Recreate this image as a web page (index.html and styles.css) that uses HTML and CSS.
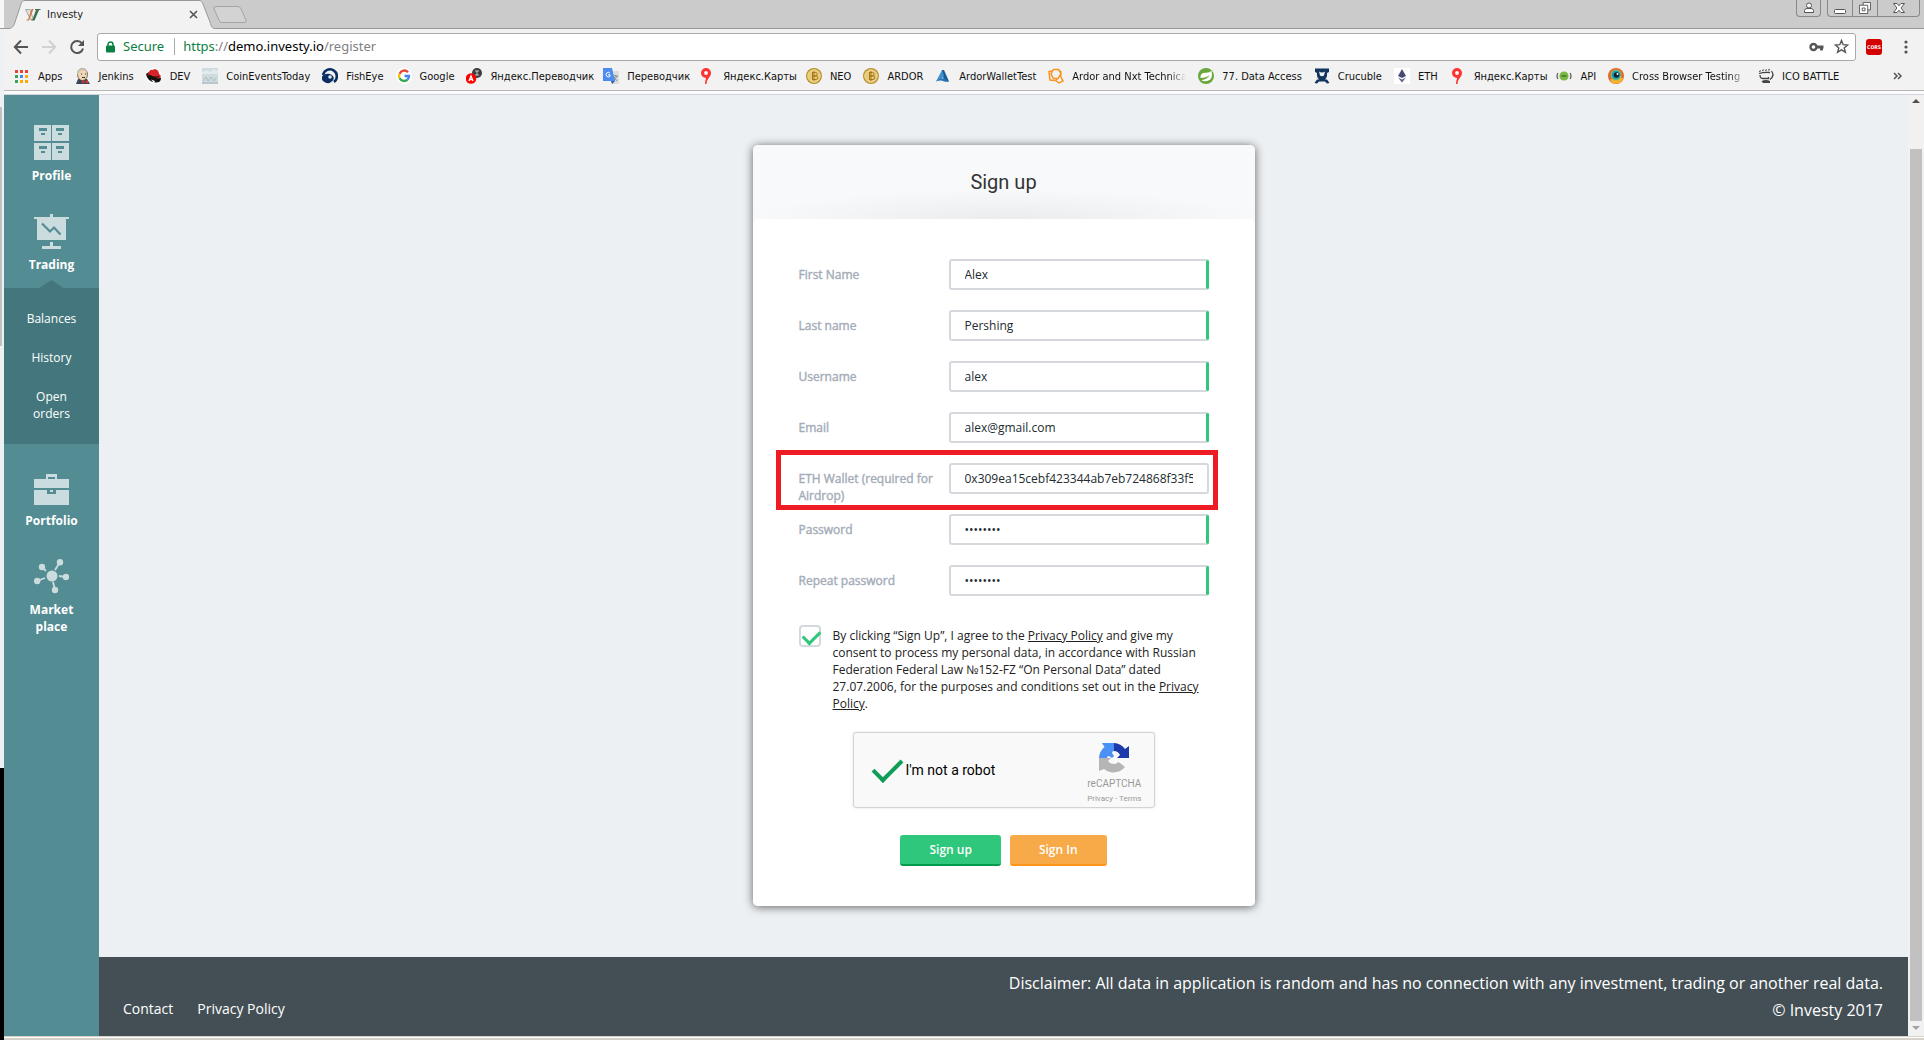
FILE: index.html
```html
<!DOCTYPE html>
<html lang="en">
<head>
    <meta charset="UTF-8">
    <meta name="viewport" content="width=device-width, initial-scale=1.0">
    <title>Investy</title>
    <link rel="stylesheet" href="styles.css">
</head>
<body>
    <div class="desktop-edge">
        <div class="edge-top"></div>
        <div class="edge-page"><div class="edge-thumb"></div></div>
        <div class="edge-black"></div>
    </div>
    <div class="browser">
        <!-- Tabs -->
        <div class="tab-strip">
            <div class="tab">
                <svg class="tab-shape" viewBox="0 0 206 29"><path d="M0 28.500C4 28 5 25 6 22L12 4C13 1 14 .5 16 .5H189C192 .5 193 1 194 4L201 22C202 26 203 28.500 206 28.500V29H0Z" fill="#f2f2f2"/><path d="M0 28.500C4 28 5 25 6 22L12 4C13 1 14 .5 16 .5H189C192 .5 193 1 194 4L201 22C202 26 203 28.500 206 28.500" fill="none" stroke="#999"/></svg>
                <svg class="tab-logo" viewBox="0 0 16 16"><path d="M.5 2.500H5L8.500 12.500H5.500Z" fill="#dfe3e0" stroke="#8a8f8b" stroke-width=".7"/><path d="M6.500 2H8.500L4 13.500H1.500V12.500H3Z" fill="#d9773f"/><path d="M10 2h5.500v1H14l-4.500 10.500H6.500V12.500H7.500L11 3H10z" fill="#3f6f50"/></svg>
                <span class="tab-title">Investy</span>
                <button class="tab-close" aria-label="Close tab"><svg viewBox="0 0 9 9"><path d="M1 1l7 7M8 1l-7 7" stroke="#555" stroke-width="1.600"/></svg></button>
            </div>
            <button class="new-tab" aria-label="New tab"><svg viewBox="0 0 34 17"><path d="M3 .5H25Q27 .5 28 3L33 14Q34 16.500 31 16.500H9Q7 16.500 6 14L1 3Q0 .5 3 .5Z" fill="#d3d3d3" stroke="#a3a3a3"/></svg></button>
            <div class="window-buttons">
                <button class="win-user" aria-label="User"><svg viewBox="0 0 12 12"><circle cx="6" cy="3.500" r="2.500" fill="#fff" stroke="#555"/><path d="M1.500 10.500V8.500Q2 6.500 4 6.500H8Q10 6.500 10.500 8.500V10.500Z" fill="#fff" stroke="#555"/></svg></button>
                <div class="win-group">
                    <button aria-label="Minimize"><svg viewBox="0 0 12 12"><rect x=".5" y="7.500" width="11" height="4" rx="1" fill="#fff" stroke="#555"/></svg></button>
                    <button aria-label="Restore"><svg viewBox="0 0 13 13"><path d="M4.500 .5H12.500V8.500H4.500Z" fill="#fff" stroke="#555"/><path d="M.5 3.500H9.500V12.500H.5Z" fill="#fff" stroke="#555"/><path d="M3.500 6.500H6.500V9.500H3.500Z" fill="none" stroke="#555"/></svg></button>
                    <button class="win-close" aria-label="Close"><svg viewBox="0 0 12 12"><path d="M.5 1.500H4L6 3.800 8 1.500H11.500L8 6 11.500 10.500H8L6 8.200 4 10.500H.5L4 6Z" fill="#fff" stroke="#555"/></svg></button>
                </div>
            </div>
        </div>

        <!-- Address bar -->
        <div class="toolbar">
            <button class="tool" aria-label="Back"><svg viewBox="0 0 16 16"><path d="M15 8H2M8 1.500L1.800 8L8 14.500" fill="none" stroke="#555" stroke-width="2"/></svg></button>
            <button class="tool" aria-label="Forward"><svg viewBox="0 0 16 16"><path d="M1 8H14M8 1.500L14.200 8L8 14.500" fill="none" stroke="#d2d2d2" stroke-width="2"/></svg></button>
            <button class="tool" aria-label="Reload"><svg viewBox="0 0 16 16"><path d="M13 4.500A6 6 0 1 0 14 9.500" fill="none" stroke="#555" stroke-width="2"/><path d="M15 1V7H9Z" fill="#555"/></svg></button>
            <div class="address">
                <svg class="lock" viewBox="0 0 9 12"><path d="M2 5V3.500a2.500 2.500 0 0 1 5 0V5" fill="none" stroke="#0b8043" stroke-width="1.500"/><rect y="4.500" width="9" height="7" rx="1" fill="#0b8043"/></svg>
                <span class="secure">Secure</span>
                <div class="url" role="textbox" aria-label="Address"><span class="scheme">https</span>://<span class="host">demo.investy.io</span>/register</div>
                <button class="key" aria-label="Passwords"><svg viewBox="0 0 15 10"><circle cx="4.500" cy="5" r="3" fill="none" stroke="#555" stroke-width="2.400"/><path d="M7 5H14.500M12.500 5V8.500" stroke="#555" stroke-width="2.800" fill="none"/></svg></button>
                <button class="star" aria-label="Bookmark"><svg viewBox="0 0 15 15"><path d="M7.500 1.500L9.200 5.700L13.700 6L10.200 8.900L11.400 13.300L7.500 10.800L3.600 13.300L4.800 8.900L1.300 6L5.800 5.700Z" fill="none" stroke="#555" stroke-width="1.400"/></svg></button>
            </div>
            <button class="cors">CORS</button>
            <button class="dots" aria-label="Menu"><svg viewBox="0 0 4 14"><circle cx="2" cy="2" r="1.600" fill="#555"/><circle cx="2" cy="7" r="1.600" fill="#555"/><circle cx="2" cy="12" r="1.600" fill="#555"/></svg></button>
        </div>

        <!-- Bookmarks -->
        <nav class="bookmarks">
            <a href="#"><svg viewBox="0 0 16 16"><path d="M1 2h3v3H1zM6 2h3v3H6zM11 2h3v3h-3z" fill="#ea4335"/><path d="M1 7h3v3H1z" fill="#34a853"/><path d="M6 7h3v3H6z" fill="#4285f4"/><path d="M11 7h3v3h-3zM6 12h3v3H6zM11 12h3v3h-3z" fill="#fbaa05"/><path d="M1 12h3v3H1z" fill="#34a853"/></svg><span>Apps</span></a>
            <a href="#"><svg viewBox="0 0 16 16"><path d="M1 16l2-5h9l3 5z" fill="#3b4553"/><ellipse cx="7.500" cy="6.500" rx="5" ry="6" fill="#f0d6b7" stroke="#5b4a3b" stroke-width=".8"/><path d="M2 7Q1 1 7 0Q12 0 12 4Q8 1 5 3Q4 5 2 7Z" fill="#c9c0af"/><path d="M6 6h1M10 6h1M7 9.500h3" stroke="#333"/><path d="M7 12l3 1.500 3-1.500v3.500l-3-1.500-3 1.500z" fill="#d33833"/></svg><span>Jenkins</span></a>
            <a href="#"><svg viewBox="0 0 16 16"><circle cx="8" cy="8" r="8" fill="#fff"/><path d="M0 6Q1 13 9 14.500Q15 15 15 10L3 4Z" fill="#16110f"/><path d="M2 6Q4 1 6 2L9 1Q13 2 13 6Q16 8 14 10Q9 11 5 8Q2 8 2 6Z" fill="#d8232a"/><path d="M3 7Q7 10.500 13 8.500" fill="none" stroke="#111" stroke-width="1.300"/><path d="M5 11.500l4 1.500-1 2z" fill="#fff"/></svg><span>DEV</span></a>
            <a href="#"><svg viewBox="0 0 16 16"><path d="M0 0H16V16H0Z" fill="#cfdcdf"/><path d="M0 4l5-2 3 2 4-3 4 2v3H0z" fill="#e3eaec"/><path d="M1 13l3-4 2 4 3-4 3 4 2-3" fill="none" stroke="#a8bcc2"/><path d="M0 15h16" stroke="#9fb2b5"/></svg><span>CoinEventsToday</span></a>
            <a href="#"><svg viewBox="0 0 16 16"><path d="M1 7A7 7 0 1 1 12 14" fill="none" stroke="#0b2f62" stroke-width="2.600"/><path d="M1 13A6 4.500 0 1 1 9 14Q6 17 1 13Z" fill="#0b2f62"/><circle cx="8" cy="9" r="1.800" fill="#dbe6f4"/></svg><span>FishEye</span></a>
            <a href="#"><svg viewBox="0 0 16 16"><circle cx="8" cy="8" r="8" fill="#fff"/><path d="M12 4.200A5 5 0 0 0 3.600 5.700" fill="none" stroke="#ea4335" stroke-width="2.400"/><path d="M3.600 5.700A5 5 0 0 0 3.600 10.300" fill="none" stroke="#fbbc05" stroke-width="2.400"/><path d="M3.600 10.300A5 5 0 0 0 11.500 11.600" fill="none" stroke="#34a853" stroke-width="2.400"/><path d="M11.500 11.600Q13 10 13 8H8.500" fill="none" stroke="#4285f4" stroke-width="2.400"/></svg><span>Google</span></a>
            <a href="#" class="ru"><svg viewBox="0 0 16 16"><circle cx="11" cy="5" r="5" fill="#3d3d3d"/><path d="M9 3h4M11 3v4M9 7h4" stroke="#ccc"/><circle cx="5" cy="10.500" r="5.300" fill="#f00"/><path d="M3 13l2-5 2 5M4 11.500h2" fill="none" stroke="#fff" stroke-width="1.300"/></svg><span>Яндекс.Переводчик</span></a>
            <a href="#" class="ru"><svg viewBox="0 0 16 16"><path d="M7 3h9v13H9z" fill="#dcdcdc"/><path d="M10 8h5M12.500 7v1M11 13l3-5M11 9l3 4" stroke="#7e9295"/><path d="M0 0h9l3 13H0z" fill="#4d8bf0"/><path d="M8 13h4l-3 3z" fill="#3158b0"/><path d="M7 5A2.300 2.300 0 1 0 7 8.300V6.800H5" fill="none" stroke="#fff"/></svg><span>Переводчик</span></a>
            <a href="#" class="ru"><svg viewBox="0 0 16 16"><path d="M7 0a5 5 0 0 1 5 5c0 4-4 5-4.500 11H6c0-3 1-5 1-6a5 5 0 0 1 0-10z" fill="#f33"/><circle cx="7" cy="5" r="1.900" fill="#fff"/></svg><span>Яндекс.Карты</span></a>
            <a href="#"><svg viewBox="0 0 16 16"><circle cx="8" cy="8" r="8" fill="#b98d2c"/><circle cx="8" cy="8" r="6.300" fill="#e8cb7a" stroke="#f4e2a4" stroke-width=".8"/><path d="M6 4.500h3.500a1.700 1.700 0 0 1 0 3.400H6.500h3.500a1.800 1.800 0 0 1 0 3.600H6M6.500 4.500v7M8 3v10" fill="none" stroke="#a4771c"/></svg><span>NEO</span></a>
            <a href="#"><svg viewBox="0 0 16 16"><circle cx="8" cy="8" r="8" fill="#b98d2c"/><circle cx="8" cy="8" r="6.300" fill="#e8cb7a" stroke="#f4e2a4" stroke-width=".8"/><path d="M6 4.500h3.500a1.700 1.700 0 0 1 0 3.400H6.500h3.500a1.800 1.800 0 0 1 0 3.600H6M6.500 4.500v7M8 3v10" fill="none" stroke="#a4771c"/></svg><span>ARDOR</span></a>
            <a href="#"><svg viewBox="0 0 16 16"><path d="M7 2h2l5 11.500h-4L7 7z" fill="#1c5b9a"/><path d="M7 2l2 6-3 3-5 2.500z" fill="#3d8fcd"/><path d="M1 13.500Q5 9 9 10.500L14 13.500H9Q6 11.500 1 13.500Z" fill="#2a74b4"/></svg><span>ArdorWalletTest</span></a>
            <a href="#" class="long-mark"><svg viewBox="0 0 16 16"><path d="M5.500 1.500H10.500L13 6L10 10.500H5.500L3 6Z" fill="none" stroke="#f7931e" stroke-width="1.500"/><path d="M4 3L1 3.500L2 12L8 12.500L9 10.500M11 2L13.500 4.500M13 6L12.500 8L15 13L11 15L7.500 12.500" fill="none" stroke="#f7931e" stroke-width="1.500"/></svg><span>Ardor and Nxt Technica</span></a>
            <a href="#"><svg viewBox="0 0 16 16"><circle cx="8" cy="8" r="8" fill="#68a63a"/><path d="M2.500 10Q2 4.500 8 4.800Q12 5 13.500 2.500Q15.500 12 9 13Q5 13.500 3.500 12.200Q9 11.500 12 7Q8 10 2.500 10Z" fill="#fff"/></svg><span>77. Data Access</span></a>
            <a href="#"><svg viewBox="0 0 16 16"><path d="M1 .5H15V4L13 5Q13.500 9 11 11.500H13L15.500 15L13 15.500L11 13.500H5L3 15.500L.5 15L3 11.500H5Q2.500 9 3 5L1 4Z" fill="#12355f"/><path d="M5 3.500Q8 5.500 11 3.500L10 7.500Q8 9 6 7.500Z" fill="#eef2f6"/></svg><span>Crucuble</span></a>
            <a href="#"><svg viewBox="0 0 16 16"><path d="M0 0h16v16H0z" fill="#fff"/><path d="M8 1l4 7-4 2-4-2z" fill="#464a75"/><path d="M4 9.500l4 2 4-2-4 5z" fill="#5d6190"/></svg><span>ETH</span></a>
            <a href="#" class="ru"><svg viewBox="0 0 16 16"><path d="M7 0a5 5 0 0 1 5 5c0 4-4 5-4.500 11H6c0-3 1-5 1-6a5 5 0 0 1 0-10z" fill="#f33"/><circle cx="7" cy="5" r="1.900" fill="#fff"/></svg><span>Яндекс.Карты</span></a>
            <a href="#"><svg viewBox="0 0 16 16"><circle cx="8" cy="8" r="4.600" fill="#78b843"/><path d="M5.500 8h5" stroke="#47702a" stroke-width="1.500"/><path d="M2 5q-2 3 0 6M14 5q2 3 0 6" fill="none" stroke="#555" stroke-width="1.200"/></svg><span>API</span></a>
            <a href="#" class="cross-mark"><svg viewBox="0 0 16 16"><circle cx="8" cy="8" r="8" fill="#e8632b"/><path d="M2 12A7 7 0 0 0 15 10L8 8z" fill="#f7b32b"/><circle cx="8" cy="7" r="5.500" fill="#8fc35b"/><circle cx="8" cy="7" r="4.500" fill="#21a0b6"/><circle cx="8.500" cy="7" r="2.800" fill="#12232d"/><circle cx="9.500" cy="6" r="1" fill="#fff"/></svg><span>Cross Browser Testing</span></a>
            <a href="#"><svg viewBox="0 0 16 16"><path d="M1.500 4l1-1.500M4.500 3l1-1.500M7.500 3l1-1.500M10.500 2.500l1-1.500M1 5.500Q6 4 12 4.500M13.500 3Q17 8 12 11.500M2 7Q2 10.500 5 10.500H10.500V9" fill="none" stroke="#444" stroke-width="1.300"/><path d="M3.500 13Q8 11 12 13V15H5Z" fill="#444"/></svg><span>ICO BATTLE</span></a>
            <button class="more" aria-label="More bookmarks"><svg viewBox="0 0 9 8"><path d="M1 1l3 3-3 3M5 1l3 3-3 3" fill="none" stroke="#555" stroke-width="1.500"/></svg></button>
        </nav>

        <div class="viewport">
            <aside class="sidebar">
                <a href="#" class="side-link">
                    <svg viewBox="0 0 35 35"><path d="M0 0h17v16H0zM18 0h17v16H18zM0 18h17v17H0zM18 18h17v17H18z" fill="#cbdcdf"/><path d="M5 3h8v3H5zM7 8h4v2H7zM22 3h8v3h-8zM24 8h4v2h-4zM5 21h8v3H5zM7 26h4v2H7zM22 21h8v3h-8zM24 26h4v2h-4z" fill="#538c93"/></svg>
                    <span>Profile</span>
                </a>
                <a href="#" class="side-link active">
                    <svg viewBox="0 0 35 35"><path d="M16 0h3v3h16v2h-3v21H3V5H0V3h16zM16 28h3v4h8v3H8v-3h8z" fill="#cbdcdf"/><path d="M8 9.500l8 8 4-4 6.500 7" fill="none" stroke="#538c93" stroke-width="2.200"/></svg>
                    <span>Trading</span>
                </a>
                <div class="submenu">
                    <a href="#">Balances</a>
                    <a href="#">History</a>
                    <a href="#">Open orders</a>
                </div>
                <a href="#" class="side-link short">
                    <svg viewBox="0 0 35 31"><path d="M12 5V0h11v5h12v9H0V5zM14 5h7V3h-7zM0 16h13v4h9v-4h13v15H0zM16 16h3v2h-3z" fill="#cbdcdf" fill-rule="evenodd"/></svg>
                    <span>Portfolio</span>
                </a>
                <a href="#" class="side-link">
                    <svg viewBox="0 0 35 35"><g stroke="#cbdcdf" stroke-width="1.800"><path d="M12 12L8 8M21 11l5-8M25 17l7 1M19 23l2 8M11 19l-8 3"/></g><g fill="#cbdcdf"><circle cx="18" cy="17" r="5.500"/><circle cx="8" cy="8" r="3.200"/><circle cx="26" cy="3.300" r="3.200"/><circle cx="32" cy="18" r="3.200"/><circle cx="21" cy="31" r="3.200"/><circle cx="3.200" cy="22" r="3.200"/></g></svg>
                    <span>Market place</span>
                </a>
            </aside>

            <div class="page">
                <main>
                    <form class="card">
                        <h1>Sign up</h1>
                        <div class="card-body">
                            <div class="row">
                                <label for="first">First Name</label>
                                <input id="first" class="valid" type="text" value="Alex">
                            </div>
                            <div class="row">
                                <label for="last">Last name</label>
                                <input id="last" class="valid" type="text" value="Pershing">
                            </div>
                            <div class="row">
                                <label for="user">Username</label>
                                <input id="user" class="valid" type="text" value="alex">
                            </div>
                            <div class="row">
                                <label for="email">Email</label>
                                <input id="email" class="valid" type="email" value="alex@gmail.com">
                            </div>
                            <div class="row marked">
                                <label for="wallet">ETH Wallet (required for Airdrop)</label>
                                <input id="wallet" type="text" value="0x309ea15cebf423344ab7eb724868f33f5">
                            </div>
                            <div class="row">
                                <label for="pass">Password</label>
                                <input id="pass" class="valid" type="password" value="password">
                            </div>
                            <div class="row">
                                <label for="repeat">Repeat password</label>
                                <input id="repeat" class="valid" type="password" value="password">
                            </div>

                            <div class="agree">
                                <input id="agree" type="checkbox" checked>
                                <label for="agree">By clicking “Sign Up”, I agree to the <a href="#">Privacy Policy</a> and give my consent to process my personal data, in accordance with Russian Federation Federal Law №152-FZ “On Personal Data” dated 27.07.2006, for the purposes and conditions set out in the <a href="#">Privacy Policy</a>.</label>
                            </div>

                            <div class="captcha">
                                <input id="robot" type="checkbox" checked>
                                <label for="robot">I'm not a robot</label>
                                <div class="captcha-brand">
                                    <svg viewBox="0 0 30 30"><path d="M0 15A15 15 0 0 1 5.500 4L3 0H15V8Q13 8 13 10L15 13L13 15L10 13Q8 13 8 15Z" fill="#4a90f5"/><path d="M15 0A15 15 0 0 1 26 6L30 3V15H18L21 12Q19 8 15 8Z" fill="#1c3aa9"/><path d="M0 15H12L9 18Q11 21 15 21Q18 21 19 19L21 20L26 24A15 15 0 0 1 5 26L0 28Z" fill="#b5b5b5"/></svg>
                                    <span>reCAPTCHA</span>
                                    <small><a href="#">Privacy</a> - <a href="#">Terms</a></small>
                                </div>
                            </div>

                            <div class="buttons">
                                <button type="submit" class="btn btn-up">Sign up</button>
                                <button type="button" class="btn btn-in">Sign In</button>
                            </div>
                        </div>
                    </form>
                </main>
                <footer>
                    <div class="foot-links">
                        <a href="#">Contact</a>
                        <a href="#">Privacy Policy</a>
                    </div>
                    <div class="foot-text">
                        <p>Disclaimer: All data in application is random and has no connection with any investment, trading or another real data.</p>
                        <p>© Investy 2017</p>
                    </div>
                </footer>
            </div>

            <div class="scrollbar">
                <svg viewBox="0 0 8 4"><path d="M0 4L4 0l4 4z" fill="#505050"/></svg>
                <div class="thumb"></div>
                <svg viewBox="0 0 8 4"><path d="M0 0h8L4 4z" fill="#a3a3a3"/></svg>
            </div>
        </div>
        <div class="window-edge"></div>
    </div>
</body>
</html>
```
FILE: styles.css
```css
* {
    box-sizing: border-box;
}
body {
    margin: 0;
    display: flex;
    height: 100vh;
    overflow: hidden;
    font-family: "Open Sans", "Noto Sans", sans-serif;
    font-size: 12px;
    line-height: 17px;
    color: #333;
}
a {
    color: inherit;
    text-decoration: none;
}
button {
    border: none;
    background: none;
    padding: 0;
    font-family: inherit;
}
svg {
    display: block;
}

/* Strip of the window behind */
.desktop-edge {
    width: 4px;
    display: flex;
    flex-direction: column;
    background: #000;
}
.edge-top {
    height: 29px;
    background: #f6f6f6;
    border-bottom: 1px solid #999;
}
.edge-page {
    height: 739px;
    padding-top: 78px;
    background: #edf1f4;
}
.edge-thumb {
    width: 2px;
    height: 239px;
    background: #c1c1c1;
}

/* Browser */
.browser {
    flex: 1;
    min-width: 0;
    display: flex;
    flex-direction: column;
    background: #f2f2f2;
}
.tab-strip {
    height: 29px;
    display: flex;
    padding: 0 4px 0 5px;
    background: #cbcbcb;
    box-shadow: inset 0 -1px #999;
}
.tab {
    position: relative;
    width: 206px;
    display: flex;
    align-items: center;
    padding: 0 17px 0 16px;
    color: #222;
}
.tab-shape {
    position: absolute;
    left: 0;
    top: 0;
    width: 206px;
    height: 29px;
}
.tab-logo {
    position: relative;
    width: 16px;
    height: 16px;
}
.tab-title {
    position: relative;
    flex: 1;
    padding-left: 6px;
    font-family: "DejaVu Sans Condensed", "DejaVu Sans", sans-serif;
    font-size: 11px;
}
.tab-close {
    position: relative;
}
.tab-close svg {
    width: 9px;
    height: 9px;
}
.new-tab {
    align-self: center;
    margin-left: -2px;
}
.new-tab svg {
    width: 34px;
    height: 17px;
}
.window-buttons {
    margin-left: auto;
    display: flex;
    gap: 6px;
    height: 17px;
}
.win-user,
.win-group {
    display: flex;
    align-items: center;
    justify-content: center;
    border: 1px solid #888;
    border-top: none;
    border-radius: 0 0 4px 4px;
}
.win-user {
    width: 25px;
}
.window-buttons svg {
    width: 12px;
    height: 12px;
}
.win-group button {
    width: 25px;
    height: 100%;
    display: flex;
    align-items: center;
    justify-content: center;
    border-right: 1px solid #888;
}
.win-group .win-close {
    width: 41px;
    border-right: none;
}
.toolbar {
    height: 35px;
    display: flex;
    align-items: center;
    padding: 0 16px 0 9px;
}
.tool {
    margin-right: 12px;
}
.tool svg {
    width: 16px;
    height: 16px;
}
.address {
    flex: 1;
    height: 28px;
    display: flex;
    align-items: center;
    margin-right: 10px;
    padding: 0 6px 0 8px;
    border: 1px solid #a9a9a9;
    border-radius: 3px;
    background: #fff;
    font-family: "Noto Sans", "Open Sans", sans-serif;
    font-size: 13px;
    color: #808080;
}
.lock {
    width: 9px;
    height: 12px;
}
.secure {
    margin-left: 8px;
    padding-right: 10px;
    border-right: 1px solid #aaa;
    color: #0b8043;
}
.url {
    flex: 1;
    padding-left: 8px;
}
.scheme {
    color: #0b8043;
}
.host {
    color: #000;
}
.key svg {
    width: 15px;
    height: 10px;
}
.star {
    margin-left: 10px;
}
.star svg {
    width: 15px;
    height: 15px;
}
.cors {
    width: 16px;
    height: 16px;
    border-radius: 3px;
    background: #d40000;
    color: #fff;
    font: bold 5px/16px "DejaVu Sans Condensed", sans-serif;
}
.dots {
    margin-left: 22px;
}
.dots svg {
    width: 4px;
    height: 14px;
}
.bookmarks {
    height: 27px;
    display: flex;
    align-items: center;
    padding: 0 22px 2px 10px;
    border-bottom: 1px solid #b5b5b5;
    font-family: "DejaVu Sans Condensed", "DejaVu Sans", sans-serif;
    font-size: 11px;
    color: #111;
}
.bookmarks a {
    display: flex;
    align-items: center;
    gap: 8px;
    margin-right: 12px;
    white-space: nowrap;
}
.bookmarks .ru {
    margin-right: 9px;
}
.bookmarks a svg {
    flex: none;
    width: 16px;
    height: 16px;
}
.bookmarks .long-mark span,
.bookmarks .cross-mark span {
    width: 114px;
    -webkit-mask-image: linear-gradient(to right, #000 85%, transparent);
    mask-image: linear-gradient(to right, #000 85%, transparent);
}
.more {
    margin-left: auto;
}
.more svg {
    width: 9px;
    height: 8px;
}
.viewport {
    flex: 1;
    min-height: 0;
    display: flex;
    border-top: 3px solid #fbfbfc;
    box-shadow: inset 0 1px #d0d3da;
    padding-top: 1px;
}
.window-edge {
    height: 4px;
    background: #d5d0c8;
    border-top: 1px solid #d5d0c8;
    box-shadow: inset 0 1px #fff;
}

/* Sidebar */
.sidebar {
    width: 95px;
    background: #538c93;
    color: #fff;
    text-align: center;
}
.side-link {
    display: flex;
    flex-direction: column;
    align-items: center;
    gap: 7px;
    padding: 30px 15px 0;
    font-weight: bold;
}
.side-link svg {
    width: 35px;
    height: 35px;
}
.side-link.short svg {
    height: 31px;
}
.side-link.active {
    padding-bottom: 7px;
}
.side-link.active::after {
    content: "";
    width: 24px;
    height: 8px;
    margin-bottom: -7px;
    background: #44777d;
    clip-path: polygon(50% 0, 100% 100%, 0 100%);
}
.submenu {
    display: flex;
    flex-direction: column;
    gap: 22px;
    padding: 22px 20px;
    background: #44777d;
}

/* Page */
.page {
    flex: 1;
    min-width: 0;
    display: flex;
    flex-direction: column;
    background: #ecf0f3;
}
main {
    flex: 1;
    padding: 50px 0;
}
.card {
    max-width: 502px;
    margin: 0 auto;
    border-radius: 5px;
    background: #f8f9fb;
    box-shadow: 0 1px 10px rgba(0, 0, 0, 0.6);
}
.card h1 {
    margin: 0;
    padding: 24px 0;
    background: radial-gradient(ellipse 50% 40% at 50% 100%, #eaecee, #f8f9fb);
    border-radius: 5px;
    font: 20px/26px Roboto, sans-serif;
    text-align: center;
}
.card-body {
    padding: 40px 46px;
    border-radius: 5px;
    background: #fff;
}
.row {
    position: relative;
    display: grid;
    grid-template-columns: 150px 1fr;
    align-items: start;
    min-height: 51px;
}
.row label {
    padding: 7px 8px 0 0;
    color: #a4acb8;
    -webkit-text-stroke: 0.4px #a4acb8;
}
.row input {
    width: 100%;
    height: 31px;
    padding: 0 14px;
    border: 2px solid #d5d9de;
    border-radius: 3px;
    background: #fff;
    font: 12px/17px "Open Sans", sans-serif;
    color: #222c30;
    outline: none;
}
.row .valid {
    border-right: 3px solid #2fc77b;
}
/* Frame around the wallet field */
.marked::after {
    content: "";
    position: absolute;
    left: -23px;
    right: -9px;
    top: -13px;
    bottom: 4px;
    border: 5px solid #ed1c24;
    pointer-events: none;
}
.agree {
    display: flex;
    align-items: flex-start;
    gap: 12px;
    margin-top: 9px;
    padding-bottom: 20px;
}
.agree input {
    flex: none;
    position: relative;
    appearance: none;
    width: 22px;
    height: 22px;
    margin: 0;
    border: 2px solid #d5d9de;
    border-radius: 4px;
}
.agree input::after {
    content: "";
    position: absolute;
    left: 2px;
    top: 3px;
    width: 14px;
    height: 8px;
    border: solid #2fc77b;
    border-width: 0 0 3px 3px;
    transform: rotate(-45deg);
}
.agree label {
    padding-top: 2px;
    color: #222;
}
.agree a {
    text-decoration: underline;
}
.captcha {
    display: flex;
    align-items: center;
    max-width: 302px;
    height: 76px;
    margin: 0 auto 27px;
    padding: 0 12px 0 18px;
    border: 1px solid #d3d3d3;
    border-radius: 3px;
    background: #f9f9f9;
    box-shadow: 0 0 3px rgba(0, 0, 0, 0.1);
}
.captcha input {
    position: relative;
    appearance: none;
    width: 28px;
    height: 24px;
    margin: 0;
}
.captcha input::after {
    content: "";
    position: absolute;
    left: 1px;
    top: 1px;
    width: 25px;
    height: 12px;
    border: solid #0f9d58;
    border-width: 0 0 4px 4px;
    transform: rotate(-45deg);
}
.captcha label {
    flex: 1;
    padding-left: 6px;
    font: 14px/17px Roboto, sans-serif;
    color: #000;
}
.captcha-brand {
    display: flex;
    flex-direction: column;
    align-items: center;
    padding-top: 9px;
    font: 10px/15px Roboto, sans-serif;
    color: #999;
}
.captcha-brand svg {
    width: 30px;
    height: 30px;
    margin-bottom: 3px;
}
.captcha-brand small {
    font-size: 8px;
}
.buttons {
    display: flex;
    justify-content: center;
    gap: 9px;
}
.btn {
    height: 31px;
    padding: 0 29px;
    border-radius: 3px;
    color: #fff;
    font: 600 12px/17px "Open Sans", sans-serif;
}
.btn-up {
    background: #2fc77b;
    border-bottom: 2px solid #009c4b;
}
.btn-in {
    background: #f8aa48;
    border-bottom: 2px solid #ff9417;
}

/* Footer */
footer {
    display: flex;
    justify-content: space-between;
    align-items: flex-end;
    padding: 13px 25px 12px 24px;
    background: #444f55;
    color: #fff;
}
.foot-links {
    display: flex;
    gap: 24px;
    padding-bottom: 6px;
    font-size: 14px;
    line-height: 19px;
}
.foot-text {
    text-align: right;
    font-size: 16px;
    line-height: 27px;
}
.foot-text p {
    margin: 0;
}

/* Scrollbar */
.scrollbar {
    width: 16px;
    display: flex;
    flex-direction: column;
    align-items: center;
    padding: 4px 2px 6px;
    background: #f1f1f1;
}
.scrollbar svg {
    width: 8px;
    height: 4px;
}
.thumb {
    flex: 1;
    width: 12px;
    margin: 46px 0 5px;
    background: #c1c1c1;
}
```
